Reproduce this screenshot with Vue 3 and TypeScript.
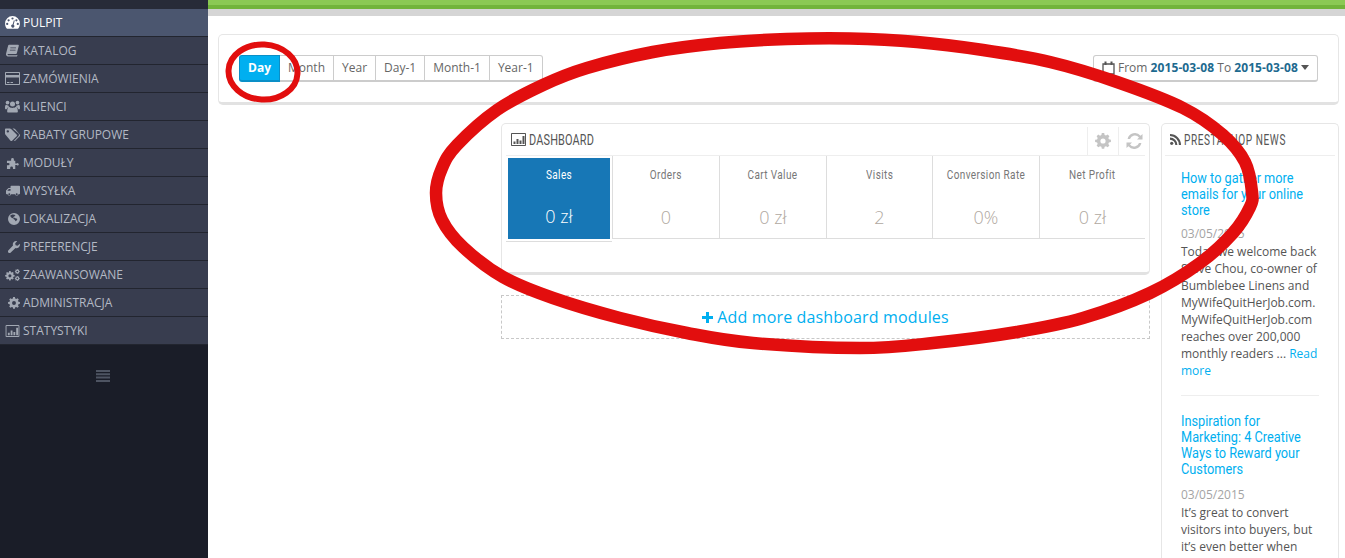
<script setup lang="ts">
const menu = [
  { label: 'PULPIT', icon: 'gauge', active: true },
  { label: 'KATALOG', icon: 'book' },
  { label: 'ZAMÓWIENIA', icon: 'card' },
  { label: 'KLIENCI', icon: 'users' },
  { label: 'RABATY GRUPOWE', icon: 'tags' },
  { label: 'MODUŁY', icon: 'puzzle' },
  { label: 'WYSYŁKA', icon: 'truck' },
  { label: 'LOKALIZACJA', icon: 'globe' },
  { label: 'PREFERENCJE', icon: 'wrench' },
  { label: 'ZAAWANSOWANE', icon: 'cogs' },
  { label: 'ADMINISTRACJA', icon: 'cog' },
  { label: 'STATYSTYKI', icon: 'chart' },
]
const ranges = ['Day', 'Month', 'Year', 'Day-1', 'Month-1', 'Year-1']
const kpis = [
  { title: 'Sales', value: '0 zł', w: 106 },
  { title: 'Orders', value: '0', w: 107 },
  { title: 'Cart Value', value: '0 zł', w: 107 },
  { title: 'Visits', value: '2', w: 106 },
  { title: 'Conversion Rate', value: '0%', w: 107 },
  { title: 'Net Profit', value: '0 zł', w: 106 },
]
const cogPath = 'M6.8 0h2.4l.4 2 1.4.6 1.7-1.1 1.7 1.7-1.1 1.7.6 1.4 2 .4v2.4l-2 .4-.6 1.4 1.1 1.7-1.7 1.7-1.7-1.1-1.4.6-.4 2H6.8l-.4-2-1.4-.6-1.7 1.1-1.7-1.7 1.1-1.7-.6-1.4-2-.4V6.8l2-.4.6-1.4-1.1-1.7 1.7-1.7 1.7 1.1 1.4-.6zM8 5.4a2.6 2.6 0 1 0 0 5.2 2.6 2.6 0 0 0 0-5.2z'

// Hand-drawn ring traced from the reference; smoothed with a closed Catmull-Rom spline.
const ring: [number, number][] = [
  [436, 193], [442, 168], [457, 145], [497, 110], [543, 85], [587, 68], [653, 52], [720, 43], [787, 39], [850, 38.500],
  [917, 42], [983, 50], [1050, 62], [1117, 82], [1183, 108], [1223, 135], [1245, 162], [1252, 192], [1250, 207],
  [1233, 233], [1200, 263], [1150, 293], [1083, 318], [1017, 332], [933, 343], [860, 348], [753, 343], [687, 333],
  [620, 318], [553, 298], [503, 277], [463, 247], [442, 220],
]
function spline(pts: [number, number][]): string {
  const n = pts.length
  let d = `M${pts[0][0]} ${pts[0][1]}`
  for (let i = 0; i < n; i++) {
    const p0 = pts[(i - 1 + n) % n]
    const p1 = pts[i]
    const p2 = pts[(i + 1) % n]
    const p3 = pts[(i + 2) % n]
    const c1x = p1[0] + (p2[0] - p0[0]) / 6
    const c1y = p1[1] + (p2[1] - p0[1]) / 6
    const c2x = p2[0] - (p3[0] - p1[0]) / 6
    const c2y = p2[1] - (p3[1] - p1[1]) / 6
    d += `C${c1x.toFixed(1)} ${c1y.toFixed(1)} ${c2x.toFixed(1)} ${c2y.toFixed(1)} ${p2[0]} ${p2[1]}`
  }
  return d + 'Z'
}
const ringPath = spline(ring)
</script>

<template>
  <div class="page">
    <aside class="sidebar">
      <ul class="menu">
        <li v-for="m in menu" :key="m.label" class="item" :class="{ active: m.active }">
          <span class="ico">
            <svg v-if="m.icon === 'gauge'" width="15" height="13" viewBox="0 0 16 14" fill="currentColor"><path fill-rule="evenodd" d="M8 0a8 8 0 0 0-8 8c0 2.200.6 4 1.800 5.400.2.300.5.4.8.4h10.800c.3 0 .6-.1.800-.4C15.400 12 16 10.200 16 8a8 8 0 0 0-8-8zM8 1.500a1.200 1.200 0 1 1 0 2.400 1.200 1.200 0 0 1 0-2.400zM3.800 3.400a1.200 1.200 0 1 1 0 2.400 1.200 1.200 0 0 1 0-2.400zM12.200 3.400a1.200 1.200 0 1 1 0 2.400 1.200 1.200 0 0 1 0-2.400zM2.300 7.400a1.200 1.200 0 1 1 0 2.400 1.200 1.200 0 0 1 0-2.400zM13.700 7.400a1.200 1.200 0 1 1 0 2.400 1.200 1.200 0 0 1 0-2.400zM9.500 4.500l.9.300-1.200 4.500a1.700 1.700 0 1 1-1.100-.2z"/></svg>
            <svg v-else-if="m.icon === 'book'" width="13" height="13" viewBox="0 0 15 13" fill="currentColor"><path d="M3.500 0H14c.6 0 .9.400.8 1l-2.300 8.700c-.1.500-.5.800-1 .8H2.400c-.5 0-.7.500-.6.800 0 .3.400.6.800.6h9.600l.6-.4.400.4-.3.900c-.2.400-.5.600-1 .6H2.200C1 13 .2 12.200 0 11c-.1-.4 0-.8.100-1.100L2.400.9C2.600.3 3 0 3.500 0zM5 3v1h6.500V3zM4.500 5.500v1h6.500v-1z"/></svg>
            <svg v-else-if="m.icon === 'card'" width="15" height="13" viewBox="0 0 15 13" fill="currentColor"><path fill-rule="evenodd" d="M1 0h13c.6 0 1 .4 1 1v11c0 .6-.4 1-1 1H1c-.6 0-1-.4-1-1V1c0-.6.400-1 1-1zM1 1v2h13V1zM1 5.500V12h13V5.500zM2 10h2.500v1H2zM5.500 10h2.500v1H5.500z"/></svg>
            <svg v-else-if="m.icon === 'users'" width="15" height="13" viewBox="0 0 16 13" fill="currentColor"><circle cx="8" cy="3.800" r="2.700"/><circle cx="2.700" cy="2.300" r="2"/><circle cx="13.300" cy="2.300" r="2"/><path d="M3.500 13c-.8 0-1.200-.5-1.200-1.200 0-2.800.7-4.800 2.400-4.800.6.500 1.800 1 3.300 1s2.700-.5 3.300-1c1.700 0 2.400 2 2.400 4.800 0 .7-.4 1.200-1.200 1.200zM0 8c0-2 .4-3.300 1.500-3.300.4.300 1 .6 2 .6.200.7.500 1.200 1 1.600C3 7.200 2 8 1.800 9.300H.9C.3 9.300 0 8.800 0 8zM16 8c0-2-.4-3.300-1.500-3.300-.4.300-1 .6-2 .6-.2.700-.5 1.200-1 1.600 1.500.300 2.500 1.100 2.700 2.400h.9c.6 0 .9-.500.9-1.300z"/></svg>
            <svg v-else-if="m.icon === 'tags'" width="15" height="14" viewBox="0 0 16 14" fill="currentColor"><path fill-rule="evenodd" d="M.8 0h4.400c.5 0 1 .3 1.300.6l5.900 5.900c.5.500.5 1.200 0 1.700l-4.800 4.800c-.5.500-1.200.5-1.700 0L.6 6.800C.3 6.400 0 5.900 0 5.400V.8C0 .3.300 0 .8 0zM3 1.800a1.300 1.300 0 1 0 0 2.600 1.300 1.300 0 0 0 0-2.600zM8 0h1.500c.4 0 .9.300 1.200.6l5 5.900c.4.500.4 1.200 0 1.700l-4.800 4.800c-.4.400-.9.400-1.300.2l4.700-5c.8-.8.800-2 0-2.800z"/></svg>
            <svg v-else-if="m.icon === 'puzzle'" width="13" height="12" viewBox="0 0 14 13" fill="currentColor"><path d="M4 4h1.500V2.600a1.500 1.500 0 0 1 3 0V4H10v3h1.500a1.300 1.300 0 1 1 0 1.800H10V13H7.500v-1.300a1.500 1.500 0 0 0-3 0V13H1V9h1.500a1.300 1.300 0 0 0 0-2.600H1V4z"/></svg>
            <svg v-else-if="m.icon === 'truck'" width="14" height="12" viewBox="0 0 17 13" fill="currentColor"><path fill-rule="evenodd" d="M6.500 0h9.500c.6 0 1 .4 1 1v8.500c0 .6-.4 1-1 1h-.8a2.200 2.200 0 0 1-4.300 0H6.200a2.200 2.200 0 0 1-4.300 0H1c-.6 0-1-.4-1-1V6.200c0-.3.100-.5.300-.7l2.400-2.400c.2-.2.500-.3.700-.3h2.100V1c0-.6.400-1 1-1zM3.500 4.200 1.600 6.200h3.900v-2zM4 9.300a1.200 1.200 0 1 0 0 2.400 1.200 1.200 0 0 0 0-2.400zM13 9.300a1.200 1.200 0 1 0 0 2.400 1.200 1.200 0 0 0 0-2.400z"/></svg>
            <svg v-else-if="m.icon === 'globe'" class="nudge" width="12" height="12" viewBox="0 0 13 13" fill="currentColor"><path fill-rule="evenodd" d="M6.500 0a6.500 6.500 0 1 1 0 13 6.500 6.500 0 0 1 0-13zM4 1.800 2.500 2.700c.1 1.200.7 2.100 1.900 2.600l1.600.6c.2.900.7 1.400 1.500 1.300l.6 1.800c.8-.3 1.800-1.600 2-2.600-.6-.4-1.300-.8-2.200-.7-.7-.5-1.300-.5-2-.3-.3-1 .2-1.500 1.100-1.700.1-.6.800-.6 1.200-1.200C7.300 1.800 5.600 1.300 4 1.800z"/></svg>
            <svg v-else-if="m.icon === 'wrench'" class="nudge" width="12" height="12" viewBox="0 0 13 13" fill="currentColor"><path d="M12.800 3.100c.4 1.500-.1 3-1.300 3.900-1 .8-2.300 1-3.400.6L2.700 12.600c-.6.600-1.500.6-2.100 0l-.3-.3c-.6-.6-.6-1.500 0-2.100l5.100-5.400c-.4-1.100-.2-2.400.6-3.400C7 .2 8.500-.2 9.900.2L7.800 2.400l.4 2.200 2.200.5z"/></svg>
            <svg v-else-if="m.icon === 'cogs'" width="15" height="12" viewBox="0 0 16 13" fill="currentColor"><g transform="translate(0 2.200) scale(.65)"><path fill-rule="evenodd" :d="cogPath"/></g><g transform="translate(10.500 0) scale(.34)"><path fill-rule="evenodd" :d="cogPath"/></g><g transform="translate(10.500 7.500) scale(.34)"><path fill-rule="evenodd" :d="cogPath"/></g></svg>
            <svg v-else-if="m.icon === 'cog'" class="nudge" width="12" height="12" viewBox="0 0 16 16" fill="currentColor"><path fill-rule="evenodd" :d="cogPath"/></svg>
            <svg v-else width="15" height="12" viewBox="0 0 15 13" fill="currentColor"><path fill-rule="evenodd" d="M1 0h13c.6 0 1 .4 1 1v11c0 .6-.4 1-1 1H1c-.6 0-1-.4-1-1V1c0-.6.400-1 1-1zM1 1v11h13V1zM2.500 8.500h2V11h-2zM5.500 6h2v5h-2zM8.500 7.500h2V11h-2zM11.500 3h2v8h-2z"/></svg>
          </span>
          <span class="lbl">{{ m.label }}</span>
        </li>
      </ul>
      <div class="collapse">
        <svg width="14" height="12" viewBox="0 0 14 12" fill="#4e5462"><path d="M0 0h14v2H0zM0 3.300h14v2H0zM0 6.600h14v2H0zM0 9.900h14v2H0z"/></svg>
      </div>
    </aside>

    <main class="main">
      <div class="topbar"></div>
      <div class="content">
        <section class="panel toolbar">
          <div class="btn-group">
            <button v-for="(r, i) in ranges" :key="r" class="btn" :class="{ on: i === 0 }">{{ r }}</button>
          </div>
          <button class="date">
            <svg class="cal" width="13" height="14" viewBox="0 0 13 14" fill="none" stroke="#555" stroke-width="1.300"><path d="M1 3h11v10H1z"/><path d="M3.500.5v3.500M9.500.5v3.500" stroke-width="2"/></svg>
            <span>From <b>2015-03-08</b> To <b>2015-03-08</b></span>
            <i class="caret"></i>
          </button>
        </section>

        <div class="columns">
          <div class="center">
            <section class="panel dash">
              <header class="dash-head">
                <h3>
                  <svg width="15" height="13" viewBox="0 0 15 13" fill="#555"><path fill-rule="evenodd" d="M1 0h13c.6 0 1 .4 1 1v11c0 .6-.4 1-1 1H1c-.6 0-1-.4-1-1V1c0-.6.400-1 1-1zM1 1v11h13V1zM2.500 8.500h2V11h-2zM5.500 6h2v5h-2zM8.500 7.500h2V11h-2zM11.500 3h2v8h-2z"/></svg>
                  <span class="cond head-text">DASHBOARD</span>
                </h3>
                <div class="tools">
                  <span class="tool"><svg width="16" height="16" viewBox="0 0 16 16" fill="#c4c4c4"><path fill-rule="evenodd" :d="cogPath"/></svg></span>
                  <span class="tool last"><svg width="17" height="16" viewBox="0 0 17 16" fill="#c4c4c4"><path d="M16.500 1v5.500H11l2-2.100A5.200 5.200 0 0 0 4 6H1.600a7.500 7.500 0 0 1 13-3.300zM.5 15V9.500H6l-2 2.100A5.200 5.200 0 0 0 13 10h2.400a7.500 7.500 0 0 1-13 3.300z"/></svg></span>
                </div>
              </header>
              <div class="kpis">
                <div v-for="(k, i) in kpis" :key="k.title" class="kpi" :class="{ on: i === 0 }" :style="{ width: k.w + 'px' }">
                  <div class="kpi-title"><span class="cond">{{ k.title }}</span></div>
                  <div class="kpi-val">{{ k.value }}</div>
                </div>
              </div>
            </section>
            <div class="add">
              <svg width="11" height="11" viewBox="0 0 11 11" fill="#00aff0"><path d="M4 0h3v4h4v3H7v4H4V7H0V4h4z"/></svg>
              <span>Add more dashboard modules</span>
            </div>
          </div>

          <aside class="panel news">
            <h3 class="news-head">
              <svg width="11" height="11" viewBox="0 0 11 11" fill="#555"><circle cx="1.700" cy="9.300" r="1.600"/><path d="M0 3.600a7.400 7.400 0 0 1 7.400 7.400H5.300A5.300 5.300 0 0 0 0 5.700zM0 0a11 11 0 0 1 11 11H8.900A8.900 8.900 0 0 0 0 2.100z"/></svg>
              <span class="cond news-text">PRESTASHOP NEWS</span>
            </h3>
            <article class="post">
              <a class="post-title cond">How to gather more emails for your online store</a>
              <div class="post-date">03/05/2015</div>
              <p>Today we welcome back Steve Chou, co-owner of Bumblebee Linens and MyWifeQuitHerJob.com. MyWifeQuitHerJob.com reaches over 200,000 monthly readers ... <a>Read more</a></p>
            </article>
            <article class="post">
              <a class="post-title cond">Inspiration for Marketing: 4 Creative Ways to Reward your Customers</a>
              <div class="post-date">03/05/2015</div>
              <p>It’s great to convert visitors into buyers, but it’s even better when</p>
            </article>
          </aside>
        </div>
      </div>
    </main>

    <svg class="scribble" width="1345" height="558" viewBox="0 0 1345 558" fill="none">
      <ellipse cx="263" cy="72" rx="34.500" ry="27.500" transform="rotate(3 263 72)" stroke="#e20e0e" stroke-width="6"/>
      <path :d="ringPath" stroke="#e20e0e" stroke-width="12.500" stroke-linejoin="round"/>
    </svg>
  </div>
</template>

<style>
html, body { margin: 0; background: #fff; }
</style>

<style scoped>
.page { position: relative; display: flex; width: 1345px; height: 558px; overflow: hidden; font-family: "Open Sans", sans-serif; font-size: 12px; color: #555; }
.sidebar { width: 208px; flex: none; background: #1a1d28; border-top: 9px solid #272b38; box-sizing: border-box; }
.menu { list-style: none; margin: 0; padding: 0; }
.item { display: flex; align-items: center; height: 28px; box-sizing: border-box; background: #383d4f; border-bottom: 1px solid #22252f; color: #b3b9c4; font-size: 12px; }
.item.active { background: #4b566f; color: #fff; }
.ico { width: 23px; flex: none; padding: 0 3px 0 5px; box-sizing: border-box; display: flex; justify-content: center; color: #a2a8b3; }
.nudge { margin-left: 2px; }
.active .ico { color: #fff; }
.lbl { line-height: 1; }
.collapse { display: flex; justify-content: center; padding: 25px 2px 0 0; }
.main { flex: 1; min-width: 0; }
.topbar { height: 16px; box-sizing: border-box; background: linear-gradient(#8bc954 0 5px, #72b43b 5px 9px, #d5d5d5 9px); }
.content { padding: 18px 6px 0 10px; }
.panel { background: #fff; border: 1px solid #e6e6e6; border-bottom: 3px solid #e2e2e2; border-radius: 5px; box-sizing: border-box; }
.toolbar { display: flex; justify-content: space-between; align-items: center; height: 71px; padding: 0 20px 1px; }
.btn-group { display: flex; }
.btn { height: 27px; padding: 0 8px; font: 12px "Open Sans", sans-serif; color: #666; background: #fff; border: 1px solid #ccc; border-left: 0; border-bottom-width: 2px; }
.btn:first-child { border-left: 1px solid #0a9bd8; border-radius: 3px 0 0 3px; }
.btn:last-child { border-radius: 0 3px 3px 0; }
.btn.on { background: #00aff0; border-color: #0a8fc7; color: #fff; font-weight: 700; width: 41px; padding: 0; }
.date { display: flex; align-items: center; height: 27px; width: 225px; padding: 0 0 0 8px; box-sizing: border-box; font: 12px "Open Sans", sans-serif; color: #666; background: #fff; border: 1px solid #ccc; border-bottom-width: 2px; border-radius: 3px; }
.date b { color: #1d6a8f; font-weight: 700; letter-spacing: .1px; }
.cal { margin-right: 3px; }
.caret { margin-left: 3px; border: 4px solid transparent; border-top: 5px solid #555; border-bottom: 0; }
.columns { display: flex; justify-content: flex-end; gap: 11px; margin-top: 18px; }
.center { width: 649px; }
.dash { height: 152px; padding: 0 0 0 4px; }
.dash-head { display: flex; justify-content: space-between; height: 32px; width: 639px; box-sizing: border-box; border-bottom: 1px solid #eee; }
.cond { display: inline-block; font-family: "Roboto", sans-serif; font-weight: 400; white-space: nowrap; }
h3 { margin: 0; font-size: 14px; font-weight: 400; color: #555; }
.dash-head h3 { display: flex; align-items: center; gap: 3px; padding-left: 5px; }
.head-text { letter-spacing: .2px; transform: scaleX(.78); transform-origin: left center; }
.tools { display: flex; margin: 3px -4px 0 0; }
.tool { display: flex; align-items: center; justify-content: center; width: 30px; border-left: 1px solid #eee; }
.tool.last { width: 30px; }
.kpis { display: flex; align-items: flex-start; width: 639px; }
.kpi { box-sizing: border-box; height: 83px; text-align: center; border-left: 1px solid #ddd; border-bottom: 1px solid #ddd; padding-top: 10px; color: #777; }
.kpi.on { height: 86px; border-left: 0; border-bottom: 1px solid #ddd; padding: 2px; background: #1777b6; background-clip: content-box; color: #fff; }
.kpi-title { font-size: 13px; line-height: 16px; }
.kpi-title span { letter-spacing: .5px; transform: scaleX(.77); }
.on .kpi-title { padding-top: 8px; }
.kpi-val { font-size: 18px; font-weight: 300; color: #b0a8a0; margin-top: 22px; line-height: 24px; }
.on .kpi-val { color: #fff; margin-top: 21px; }
.add { margin-top: 20px; height: 44px; box-sizing: border-box; border: 1px dashed #c8c8c8; display: flex; align-items: center; justify-content: center; gap: 4px; color: #00aff0; font-size: 16px; letter-spacing: .15px; }
.news { width: 178px; height: 540px; padding: 0 3px; flex: none; border-bottom: 0; }
.news-head { display: flex; align-items: center; gap: 3px; height: 32px; box-sizing: border-box; border-bottom: 1px solid #eee; padding-left: 5px; }
.news-text { letter-spacing: .8px; transform: scaleX(.72); transform-origin: left center; }
.post { margin: 0 16px; padding: 14px 0 16px; border-bottom: 1px solid #eee; }
.post + .post { border-bottom: 0; padding-top: 17px; }
.post-title { display: block; width: 161px; white-space: normal; color: #00aff0; font-size: 15px; line-height: 16px; transform: scaleX(.85); transform-origin: left top; }
.post-date { margin-top: 7px; color: #a4a4a4; font-size: 12px; line-height: 18px; }
.post + .post .post-date { margin-top: 9px; }
p { margin: 0; font-size: 12px; line-height: 17px; color: #555; }
p a { color: #00aff0; }
.scribble { position: absolute; left: 0; top: 0; pointer-events: none; }
</style>
